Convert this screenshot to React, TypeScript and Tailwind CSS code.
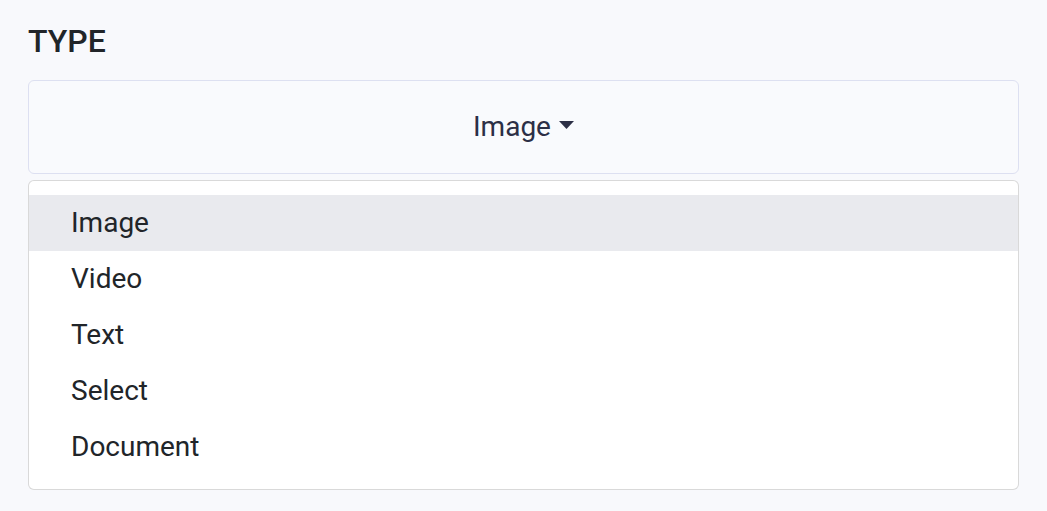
export default function App() {
  const options = ["Image", "Video", "Text", "Select", "Document"];

  return (
    <div
      className="relative min-h-screen w-full bg-[#f8f9fc] px-[28px] pt-[22px]"
      style={{ fontFamily: "Roboto, 'Liberation Sans', sans-serif" }}
    >
      {/* Type field */}
      <div className="text-[32px] leading-[38px] font-medium text-[#212529]">TYPE</div>
      <button className="mt-[20px] flex h-[94px] w-full items-center justify-center gap-[8px] rounded-[6px] border border-[#dde0f1] bg-[#f9fafd] text-[28px] text-[#2c2f46]">
        <span>Image</span>
        <svg width="15" height="8" viewBox="0 0 15 8" className="mb-[4px]">
          <polygon points="0,0 15,0 7.5,8" fill="#2c2f46" />
        </svg>
      </button>

      {/* Next field, covered by the open menu */}
      <div className="mt-[126px] h-[90px] w-full rounded-[6px] border border-[#d3d7f0] bg-[#f9fafd]" />

      {/* Dropdown menu */}
      <div className="absolute left-[28px] right-[28px] top-[180px] rounded-[6px] border border-black/15 bg-white py-[14px]">
        {options.map((opt, i) => (
          <div
            key={opt}
            className={`flex h-[56px] items-center px-[42px] text-[28px] text-[#212529] ${
              i === 0 ? "bg-[#e9eaee]" : ""
            }`}
          >
            {opt}
          </div>
        ))}
      </div>
    </div>
  );
}
